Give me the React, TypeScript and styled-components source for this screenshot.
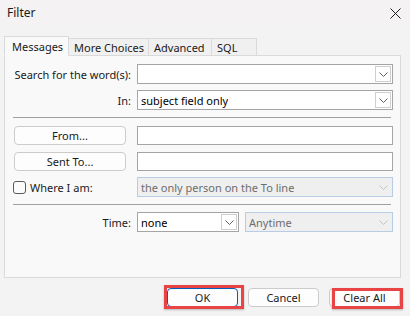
import React from "react";
import styled, { createGlobalStyle } from "styled-components";

const GlobalStyle = createGlobalStyle`
  body {
    margin: 0;
    font-family: "Segoe UI", "Noto Sans", sans-serif;
    font-size: 11px;
    color: #1a1a1a;
  }
`;

const tabs = [
  { name: "Messages", width: 65 },
  { name: "More Choices", width: 80 },
  { name: "Advanced", width: 63 },
  { name: "SQL", width: 45 },
];

const Chevron = ({ faded }: { faded?: boolean }) => (
  <svg width="9" height="5" viewBox="0 0 9 5">
    <path d="M0.5 0.5 L4.5 4.5 L8.5 0.5" fill="none" stroke={faded ? "#c4c4c4" : "#5f5f5f"} strokeWidth="1" />
  </svg>
);

const Combo = ({ value, disabled, width }: { value?: string; disabled?: boolean; width?: number }) => (
  <ComboBox $disabled={disabled} style={width ? { width } : undefined}>
    <ComboText $disabled={disabled}>{value}</ComboText>
    <DropButton $disabled={disabled}>
      <Chevron faded={disabled} />
    </DropButton>
  </ComboBox>
);

const Dialog = () => {
  return (
    <Window>
      <TitleBar>
        <span>Filter</span>
        <svg width="11" height="11" viewBox="0 0 11 11">
          <path d="M0.5 0.5 L10.5 10.5 M10.5 0.5 L0.5 10.5" stroke="#1f1f1f" strokeWidth="1" />
        </svg>
      </TitleBar>
      <TabStrip>
        {tabs.map((t, i) => (
          <Tab key={t.name} $active={i === 0} $width={t.width}>
            {t.name}
          </Tab>
        ))}
      </TabStrip>
      <Panel>
        <Section>
          <Row>
            <Label>Search for the word(s):</Label>
            <Combo />
          </Row>
          <Row>
            <Label>In:</Label>
            <Combo value="subject field only" />
          </Row>
        </Section>
        <Separator />
        <Section>
          <Row>
            <SideButton>From...</SideButton>
            <TextBox />
          </Row>
          <Row>
            <SideButton>Sent To...</SideButton>
            <TextBox />
          </Row>
          <Row>
            <CheckLabel>
              <CheckBox />
              Where I am:
            </CheckLabel>
            <Combo value="the only person on the To line" disabled />
          </Row>
        </Section>
        <Separator />
        <Row>
          <Label>Time:</Label>
          <Pair>
            <Combo value="none" width={102} />
            <Combo value="Anytime" disabled width={148} />
          </Pair>
        </Row>
      </Panel>
      <Footer>
        <Marked>
          <FooterButton $primary>OK</FooterButton>
          <Highlight $l={-3} $t={-3} $r={-6} $b={-2} />
        </Marked>
        <FooterButton>Cancel</FooterButton>
        <Marked>
          <FooterButton>Clear All</FooterButton>
          <Highlight $l={3} $t={0} $r={-3} $b={-2} />
        </Marked>
      </Footer>
    </Window>
  );
};

export default function App() {
  return (
    <>
      <GlobalStyle />
      <Dialog />
    </>
  );
}

const Window = styled.div`
  width: 410px;
  height: 316px;
  background: #f3f3f3;
  display: flex;
  flex-direction: column;
  overflow: hidden;
`;

const TitleBar = styled.div`
  height: 27px;
  padding: 0 9px 0 7px;
  display: flex;
  align-items: center;
  justify-content: space-between;
  background: #f4f2f2;
  font-size: 12px;
  span {
    margin-top: -2px;
  }
`;

const TabStrip = styled.div`
  height: 28px;
  padding-left: 4px;
  display: flex;
  align-items: flex-end;
  position: relative;
  z-index: 1;
`;

const Tab = styled.div<{ $active?: boolean; $width: number }>`
  width: ${(p) => p.$width}px;
  box-sizing: border-box;
  height: ${(p) => (p.$active ? 20 : 17)}px;
  padding-left: ${(p) => (p.$active ? 7 : 5)}px;
  display: flex;
  align-items: center;
  white-space: nowrap;
  background: ${(p) => (p.$active ? "#f9f9f9" : "#f0f0f0")};
  border: 1px solid #dadada;
  border-bottom: ${(p) => (p.$active ? "1px solid #f9f9f9" : "none")};
  margin-bottom: ${(p) => (p.$active ? -1 : 0)}px;
  & + & {
    border-left: none;
  }
`;

const Panel = styled.div`
  margin: 0 9px 0 4px;
  height: 223px;
  box-sizing: border-box;
  background: #f9f9f9;
  border: 1px solid #dadada;
  padding: 8px 7px 0 8px;
  display: flex;
  flex-direction: column;
`;

const Section = styled.div`
  display: flex;
  flex-direction: column;
  gap: 6px;
`;

const Row = styled.div`
  display: grid;
  grid-template-columns: 118px 256px;
  column-gap: 6px;
  align-items: center;
  height: 20px;
`;

const Label = styled.span`
  text-align: right;
  white-space: nowrap;
`;

const Separator = styled.div`
  height: 1px;
  background: #a0a0a0;
  margin: 7px 2px 7px 0;
`;

const ComboBox = styled.div<{ $disabled?: boolean }>`
  height: 20px;
  box-sizing: border-box;
  border: 1px solid ${(p) => (p.$disabled ? "#b8cce4" : "#a5a5a5")};
  background: ${(p) => (p.$disabled ? "#efefef" : "#ffffff")};
  display: flex;
  align-items: center;
  justify-content: space-between;
  padding: 0 1px 0 3px;
`;

const ComboText = styled.span<{ $disabled?: boolean }>`
  color: ${(p) => (p.$disabled ? "#6d6d6d" : "#000000")};
  white-space: nowrap;
  overflow: hidden;
`;

const DropButton = styled.div<{ $disabled?: boolean }>`
  width: 16px;
  height: 16px;
  box-sizing: border-box;
  border: 1px solid ${(p) => (p.$disabled ? "transparent" : "#cfcfcf")};
  background: ${(p) => (p.$disabled ? "transparent" : "#ffffff")};
  display: flex;
  align-items: center;
  justify-content: center;
`;

const TextBox = styled.div`
  height: 19px;
  box-sizing: border-box;
  border: 1px solid #a5a5a5;
  background: #ffffff;
`;

const SideButton = styled.button`
  width: 112px;
  height: 19px;
  margin-left: 1px;
  box-sizing: border-box;
  border: 1px solid #cccccc;
  border-radius: 4px;
  background: #fdfdfd;
  font: inherit;
  color: #1a1a1a;
  padding: 0;
`;

const CheckLabel = styled.label`
  display: flex;
  align-items: center;
  gap: 4px;
  white-space: nowrap;
`;

const CheckBox = styled.span`
  width: 13px;
  height: 13px;
  box-sizing: border-box;
  border: 1px solid #5a5a5a;
  border-radius: 3px;
  background: #fbfbfb;
`;

const Pair = styled.div`
  display: flex;
  gap: 6px;
`;

const Footer = styled.div`
  display: flex;
  justify-content: flex-end;
  gap: 10px;
  padding: 10px 10px 0 0;
`;

const Marked = styled.div`
  position: relative;
  display: flex;
`;

const FooterButton = styled.button<{ $primary?: boolean }>`
  width: 71px;
  height: 19px;
  box-sizing: border-box;
  border: 1px solid ${(p) => (p.$primary ? "#005fb8" : "#cccccc")};
  border-radius: 4px;
  background: #fdfdfd;
  font: inherit;
  color: #1a1a1a;
  padding: 0;
`;

const Highlight = styled.span<{ $l: number; $t: number; $r: number; $b: number }>`
  position: absolute;
  left: ${(p) => p.$l}px;
  top: ${(p) => p.$t}px;
  right: ${(p) => p.$r}px;
  bottom: ${(p) => p.$b}px;
  border: 3px solid #e84446;
  box-shadow: 0 1px 2px rgba(0, 0, 0, 0.25);
  pointer-events: none;
`;
